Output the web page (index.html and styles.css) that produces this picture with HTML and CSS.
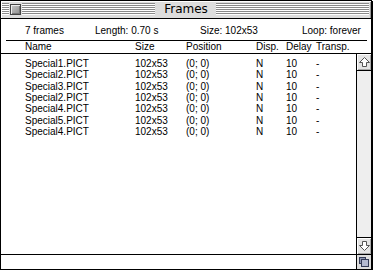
FILE: index.html
```html
<!DOCTYPE html>
<html>
<head>
<meta charset="utf-8">
<link rel="stylesheet" href="styles.css">
</head>
<body>
<div class="window">
  <div class="titlebar">
    <div class="tb-side">
      <div class="stripes stripes-short"></div>
      <div class="closebox"></div>
      <div class="stripes"></div>
    </div>
    <div class="title">Frames</div>
    <div class="tb-side">
      <div class="stripes"></div>
    </div>
  </div>
  <div class="info">
    <span>7 frames</span>
    <span>Length: 0.70 s</span>
    <span>Size: 102x53</span>
    <span>Loop: forever</span>
  </div>
  <div class="rule"></div>
  <div class="cols row">
    <span>Name</span><span>Size</span><span>Position</span><span>Disp.</span><span>Delay</span><span>Transp.</span>
  </div>
  <div class="scrollarea">
    <div class="list">
      <div class="row"><span>Special1.PICT</span><span>102x53</span><span>(0; 0)</span><span>N</span><span>10</span><span>-</span></div>
      <div class="row"><span>Special2.PICT</span><span>102x53</span><span>(0; 0)</span><span>N</span><span>10</span><span>-</span></div>
      <div class="row"><span>Special3.PICT</span><span>102x53</span><span>(0; 0)</span><span>N</span><span>10</span><span>-</span></div>
      <div class="row"><span>Special2.PICT</span><span>102x53</span><span>(0; 0)</span><span>N</span><span>10</span><span>-</span></div>
      <div class="row"><span>Special4.PICT</span><span>102x53</span><span>(0; 0)</span><span>N</span><span>10</span><span>-</span></div>
      <div class="row"><span>Special5.PICT</span><span>102x53</span><span>(0; 0)</span><span>N</span><span>10</span><span>-</span></div>
      <div class="row"><span>Special4.PICT</span><span>102x53</span><span>(0; 0)</span><span>N</span><span>10</span><span>-</span></div>
    </div>
    <div class="scrollbar">
      <div class="arrow arrow-up">
        <svg width="15" height="16" viewBox="0 0 15 16"><polygon points="7.5,3.5 12.5,8.5 9.5,8.5 9.5,12.5 5.5,12.5 5.5,8.5 2.5,8.5" fill="#fff" stroke="#555" stroke-width="1"/></svg>
      </div>
      <div class="track"></div>
      <div class="arrow arrow-down">
        <svg width="15" height="16" viewBox="0 0 15 16"><polygon points="7.5,12.5 12.5,7.5 9.5,7.5 9.5,3.5 5.5,3.5 5.5,7.5 2.5,7.5" fill="#fff" stroke="#555" stroke-width="1"/></svg>
      </div>
    </div>
  </div>
  <div class="bottom">
    <div class="bottom-fill"></div>
    <div class="growbox">
      <svg width="14" height="14" viewBox="0 0 14 14"><rect x="2.5" y="2.5" width="6" height="6" fill="#8c94b0" stroke="#333a55"/><rect x="4.5" y="4.5" width="7" height="7" fill="#b4bad0" stroke="#333a55"/></svg>
    </div>
  </div>
</div>
</body>
</html>
```

FILE: styles.css
```css
* { box-sizing: border-box; }
html, body { margin: 0; padding: 0; background: #fff; }
body {
  font-family: "Liberation Sans", Arial, sans-serif;
  font-size: 10px;
  color: #000;
}
.window {
  width: 372px;
  height: 270px;
  border: 1px solid #000;
  box-shadow: 1px 1px 0 #000;
  display: flex;
  flex-direction: column;
  background: #fff;
}
.titlebar {
  height: 18px;
  flex: none;
  background: #dddddd;
  border-bottom: 1px solid #000;
  box-shadow: inset 1px 1px 0 #fff, inset -1px 0 0 #999;
  display: grid;
  grid-template-columns: 1fr auto 1fr;
}
.tb-side {
  display: flex;
  align-items: flex-start;
  padding: 2px 2px 0 1px;
}
.stripes {
  flex: 1;
  height: 12px;
  background: repeating-linear-gradient(to bottom, #8a8a8a 0 1px, #ffffff 1px 2px);
}
.stripes-short { flex: none; width: 7px; }
.closebox {
  flex: none;
  width: 11px;
  height: 11px;
  margin: 1px 1px 0 1px;
  border: 1px solid #444;
  background: linear-gradient(135deg, #c8c8c8, #8e8e8e);
  box-shadow: inset 1px 1px 0 #eee, inset -1px -1px 0 #777;
}
.title {
  font-family: "DejaVu Sans", sans-serif;
  font-size: 12px;
  line-height: 17px;
  padding: 0 7px;
}
.info {
  height: 21px;
  flex: none;
  display: grid;
  grid-template-columns: 70px 105px 102px 1fr;
  align-items: center;
  padding: 2px 0 0 24px;
}
.rule {
  height: 1px;
  flex: none;
  background: #000;
  margin: 0 4px 0 5px;
}
.row {
  display: grid;
  grid-template-columns: 110px 51px 70px 30px 30px 1fr;
  align-items: center;
  padding-left: 24px;
  white-space: nowrap;
}
.cols {
  height: 13px;
  flex: none;
  border-bottom: 1px solid #000;
  padding-bottom: 1px;
}
.scrollarea {
  height: 201px;
  flex: none;
  display: flex;
  border-bottom: 1px solid #000;
}
.list {
  flex: 1;
  padding-top: 4px;
}
.list .row { height: 11.33px; }
.scrollbar {
  width: 15px;
  flex: none;
  border-left: 1px solid #000;
  background: #eeeeee;
  display: flex;
  flex-direction: column;
}
.arrow {
  height: 17px;
  flex: none;
  background: #e4e4e4;
  box-shadow: inset 1px 1px 0 #fff, inset -1px -1px 0 #aaa;
}
.arrow svg { display: block; }
.arrow-up { border-bottom: 1px solid #000; }
.arrow-down { border-top: 1px solid #000; }
.track { flex: 1; }
.bottom {
  flex: 1;
  display: flex;
}
.bottom-fill { flex: 1; }
.growbox {
  width: 15px;
  flex: none;
  border-left: 1px solid #000;
  background: #dddddd;
}
.growbox svg { display: block; }
```
